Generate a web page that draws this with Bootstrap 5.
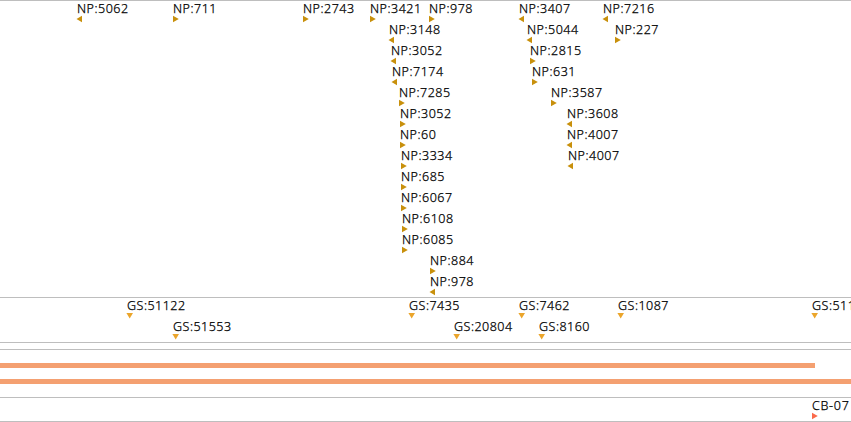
<!DOCTYPE html>
<html lang="en">
<head>
    <meta charset="UTF-8">
    <meta name="viewport" content="width=device-width, initial-scale=1.0">
    <title>Genome Browser Tracks</title>
    <link href="https://cdn.jsdelivr.net/npm/bootstrap@5.3.0/dist/css/bootstrap.min.css" rel="stylesheet">
    <style>
        body { background: #fff; color: #000; font-family: "Noto Sans", sans-serif; font-size: 12.5px; font-weight: 300; line-height: 15px; -webkit-text-stroke: 0.25px #000; }
        .track { border-top: 1px solid #bebebe; }
        .track-np { height: 297px; padding-top: 1px; }
        .track-gs { height: 45px; padding-top: 1px; }
        .track-gap { height: 7px; }
        .track-bars { height: 48px; padding-top: 13px; gap: 11px; }
        .track-cb { height: 24px; padding-top: 1px; }
        .track-cb .feature { letter-spacing: 0.7px; }
        .lane { height: 21px; }
        .feature { top: 0; letter-spacing: 0.5px; white-space: nowrap; }
        .feature svg { display: block; }
        .feature span { display: block; height: 15px; margin-top: -1px; }
        .span-bar { height: 5px; background: #f4a071; }
    </style>
</head>
<body class="overflow-hidden">
    <main id="tracks" class="d-flex flex-column">
        <section class="track track-np" data-track="np"></section>
        <section class="track track-gs" data-track="gs"></section>
        <section class="track track-gap"></section>
        <section class="track track-bars d-flex flex-column">
            <div class="span-bar" style="width: 815px"></div>
            <div class="span-bar w-100"></div>
        </section>
        <section class="track track-cb" data-track="cb"></section>
        <div class="track"></div>
    </main>

    <script src="https://cdn.jsdelivr.net/npm/bootstrap@5.3.0/dist/js/bootstrap.bundle.min.js"></script>
    <script>
        // Each lane is a list of [label, start, direction]
        const tracks = {
            np: [
                [['NP:5062', 77, 'left'], ['NP:711', 173, 'right'], ['NP:2743', 303, 'right'], ['NP:3421', 370, 'right'],
                 ['NP:978', 429, 'right'], ['NP:3407', 519, 'left'], ['NP:7216', 603, 'left']],
                [['NP:3148', 389, 'left'], ['NP:5044', 527, 'left'], ['NP:227', 615, 'right']],
                [['NP:3052', 391, 'left'], ['NP:2815', 530, 'right']],
                [['NP:7174', 392, 'left'], ['NP:631', 532, 'right']],
                [['NP:7285', 399, 'right'], ['NP:3587', 551, 'right']],
                [['NP:3052', 400, 'right'], ['NP:3608', 567, 'left']],
                [['NP:60', 400, 'right'], ['NP:4007', 567, 'left']],
                [['NP:3334', 401, 'right'], ['NP:4007', 568, 'left']],
                [['NP:685', 401, 'right']],
                [['NP:6067', 401, 'right']],
                [['NP:6108', 402, 'right']],
                [['NP:6085', 402, 'right']],
                [['NP:884', 430, 'right']],
                [['NP:978', 430, 'left']]
            ],
            gs: [
                [['GS:51122', 127, 'down'], ['GS:7435', 409, 'down'], ['GS:7462', 519, 'down'], ['GS:1087', 618, 'down'], ['GS:511', 812, 'down']],
                [['GS:51553', 173, 'down'], ['GS:20804', 454, 'down'], ['GS:8160', 539, 'down']]
            ],
            cb: [
                [['CB-07', 812, 'right']]
            ]
        };

        const colors = { np: '#c8900c', gs: '#eba52b', cb: '#fa6a4b' };

        const arrows = {
            left: '-0.5,3 5,-0.3 5,6.3',
            right: '0,-0.3 5.8,3 0,6.3',
            down: '-0.6,0 6,0 2.7,5.5'
        };

        document.querySelectorAll('[data-track]').forEach(section => {
            const name = section.dataset.track;
            section.innerHTML = tracks[name].map(lane => `
                <div class="lane position-relative">
                    ${lane.map(([label, start, dir]) => `
                        <div class="feature position-absolute" style="left: ${start}px">
                            <span>${label}</span>
                            <svg class="overflow-visible" width="6" height="7" fill="${colors[name]}"><polygon points="${arrows[dir]}"/></svg>
                        </div>
                    `).join('')}
                </div>
            `).join('');
        });
    </script>
</body>
</html>
